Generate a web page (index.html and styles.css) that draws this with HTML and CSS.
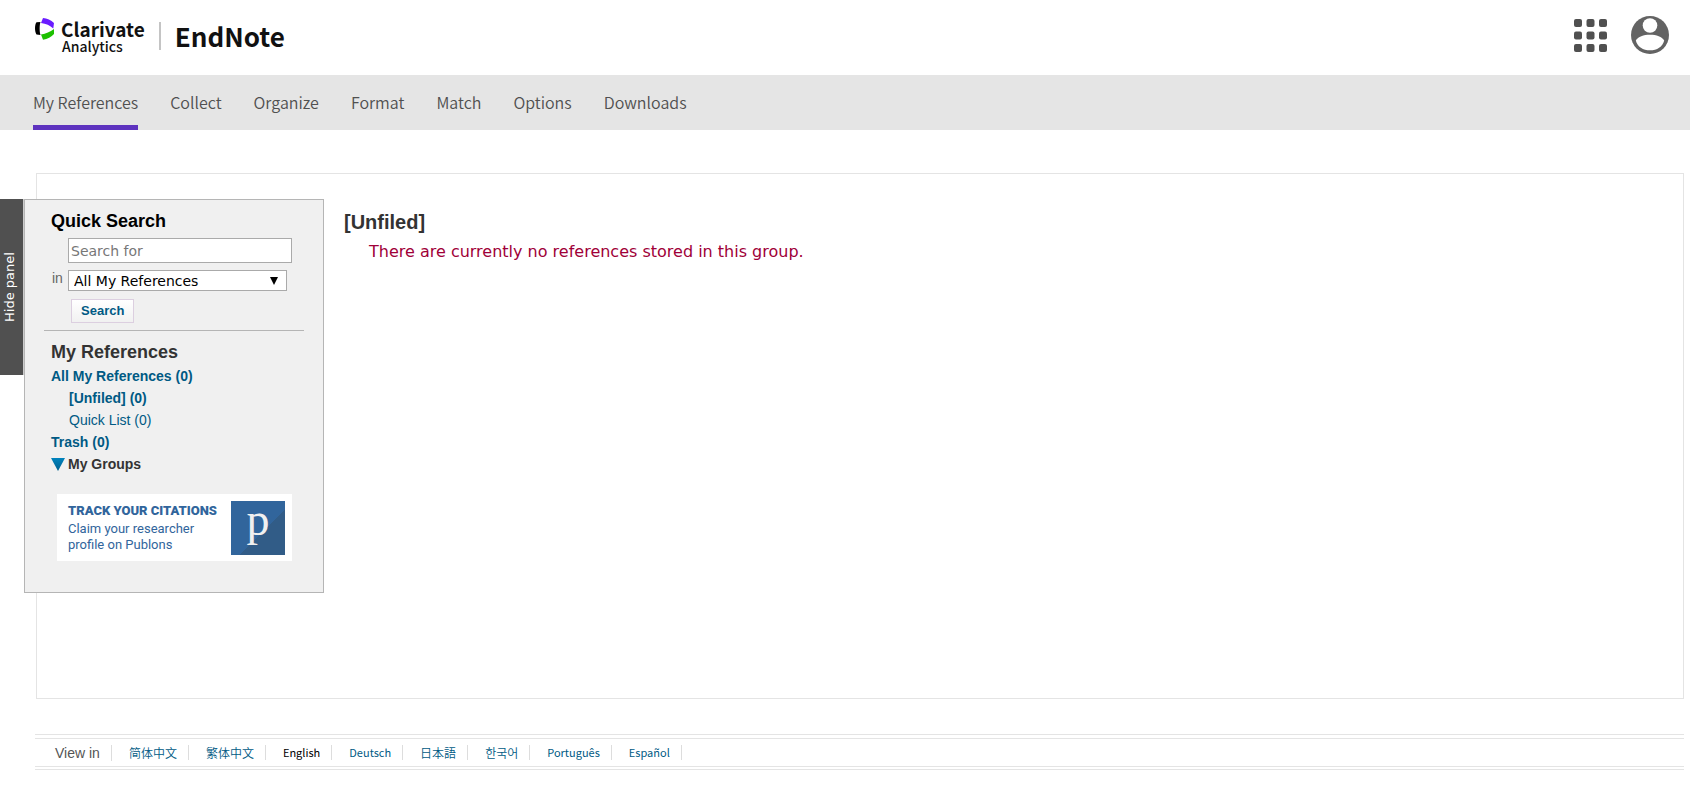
FILE: index.html
```html
<!DOCTYPE html>
<html lang="en">
<head>
<meta charset="utf-8">
<title>EndNote</title>
<link rel="stylesheet" href="styles.css">
</head>
<body>
<header class="header">
  <div class="brand">
    <div class="clarivate">
      <svg class="clarivate-mark" width="20" height="22" viewBox="0 0 20 22" aria-hidden="true">
        <path d="M6.500 4C5.400 7 5.400 13.500 6.500 17L2.500 16.500C.5 14 .5 6.500 2.500 4.300z" fill="#000"/>
        <path d="M9 0C13 .5 17 2 20 5L19.300 10.500C16 7.500 12 5.500 7 5z" fill="#6a1cff"/>
        <path d="M20 11v5c-2.600 3-6.500 5.200-11 5.700L7 16.500c5-.700 9-2.500 13-5.500z" fill="#1dc000"/>
      </svg>
      <div class="clarivate-name"><span class="clarivate-top">Clarivate</span><span class="clarivate-sub">Analytics</span></div>
    </div>
    <span class="brand-rule"></span>
    <span class="product">EndNote</span>
  </div>
  <div class="tools">
    <button class="icon-button" type="button" aria-label="Products">
      <svg width="34" height="34" viewBox="0 0 34 34" fill="#505050">
        <rect x="0" y="0" width="8" height="8" rx="2"/><rect x="12.500" y="0" width="8" height="8" rx="2"/><rect x="25" y="0" width="8" height="8" rx="2"/>
        <rect x="0" y="12.500" width="8" height="8" rx="2"/><rect x="12.500" y="12.500" width="8" height="8" rx="2"/><rect x="25" y="12.500" width="8" height="8" rx="2"/>
        <rect x="0" y="25" width="8" height="8" rx="2"/><rect x="12.500" y="25" width="8" height="8" rx="2"/><rect x="25" y="25" width="8" height="8" rx="2"/>
      </svg>
    </button>
    <button class="icon-button" type="button" aria-label="Account">
      <svg width="38" height="38" viewBox="0 0 38 38">
        <circle cx="19" cy="19" r="19" fill="#636363"/>
        <circle cx="19" cy="9.500" r="7.300" fill="#fff"/>
        <path d="M4.800 24.500C7 20.800 12.500 18.800 19 18.800s12 2 14.200 5.700C31.500 31 26 34.300 19 34.300S6.500 31 4.800 24.500z" fill="#fff"/>
      </svg>
    </button>
  </div>
</header>
<nav class="nav">
  <a class="nav-item nav-item-active" href="#">My References</a>
  <a class="nav-item" href="#">Collect</a>
  <a class="nav-item" href="#">Organize</a>
  <a class="nav-item" href="#">Format</a>
  <a class="nav-item" href="#">Match</a>
  <a class="nav-item" href="#">Options</a>
  <a class="nav-item" href="#">Downloads</a>
</nav>
<main class="frame">
  <div class="side">
    <button class="hide-panel" type="button">Hide panel</button>
    <aside class="panel">
      <form class="search">
        <h2 class="panel-title search-title">Quick Search</h2>
        <input class="search-text" type="text" placeholder="Search for" aria-label="Search for">
        <div class="scope">
          <label class="scope-label" for="scope">in</label>
          <div class="select-box">
            <select class="scope-select" id="scope"><option>All My References</option></select>
            <svg class="select-arrow" width="8" height="8" viewBox="0 0 8 8" aria-hidden="true"><path d="M0 0h8L4 8z" fill="#000"/></svg>
          </div>
        </div>
        <button class="search-button" type="button">Search</button>
      </form>
      <section class="groups">
        <h2 class="panel-title">My References</h2>
        <ul class="group-list">
          <li><a class="group" href="#">All My References (0)</a></li>
          <li class="nested"><a class="group" href="#">[Unfiled] (0)</a></li>
          <li class="nested"><a class="group group-plain" href="#">Quick List (0)</a></li>
          <li><a class="group" href="#">Trash (0)</a></li>
          <li class="my-groups">
            <svg width="14" height="13" viewBox="0 0 14 13" aria-hidden="true"><defs><linearGradient id="arrow" x2="0" y2="1"><stop stop-color="#0083bd"/><stop offset="1" stop-color="#00608f"/></linearGradient></defs><path d="M0 0h14L7 13z" fill="url(#arrow)"/></svg>
            <span>My Groups</span>
          </li>
        </ul>
      </section>
      <a class="banner" href="#">
        <span class="banner-text"><strong class="banner-title">TRACK YOUR CITATIONS</strong><span>Claim your researcher</span><span>profile on Publons</span></span>
        <span class="publons">p</span>
      </a>
    </aside>
  </div>
  <section class="content">
    <h1 class="content-title">[Unfiled]</h1>
    <p class="message">There are currently no references stored in this group.</p>
  </section>
</main>
<footer class="footer">
  <div class="languages">
    <span class="view-in">View in</span>
    <a class="language cjk" href="#" lang="zh-Hans">简体中文</a>
    <a class="language cjk" href="#" lang="zh-Hant">繁体中文</a>
    <a class="language current" href="#">English</a>
    <a class="language" href="#" lang="de">Deutsch</a>
    <a class="language cjk" href="#" lang="ja">日本語</a>
    <a class="language cjk" href="#" lang="ko">한국어</a>
    <a class="language" href="#" lang="pt">Português</a>
    <a class="language" href="#" lang="es">Español</a>
  </div>
</footer>
</body>
</html>
```

FILE: styles.css
```css
* { box-sizing: border-box; }
body { margin: 0; background: #fff; color: #333; font-family: "Liberation Sans", Arial, sans-serif; font-size: 14px; }
h1, h2, p, ul { margin: 0; padding: 0; }
ul { list-style: none; }
a { text-decoration: none; }
button { border: 0; padding: 0; background: none; cursor: pointer; }
svg { display: block; flex: none; }

.header { height: 75px; display: flex; justify-content: space-between; padding: 16px 21px 0 34px; }
.brand { display: flex; align-items: flex-start; color: #111; font-family: "Noto Sans CJK SC", "Noto Sans", sans-serif; }
.clarivate { display: flex; gap: 7px; padding-top: 2px; }
.clarivate-name { display: flex; flex-direction: column; }
.clarivate-top { font-size: 19px; font-weight: 700; line-height: 22px; }
.clarivate-sub { font-size: 14px; font-weight: 500; line-height: 12px; padding-left: 1px; }
.brand-rule { width: 2px; height: 28px; background: #c4c4c4; margin: 6px 14px 0; }
.product { font-size: 26px; font-weight: 700; line-height: 40px; }
.tools { display: flex; gap: 23px; align-items: flex-start; }
.tools .icon-button:first-child { padding-top: 3px; }

.nav { display: flex; gap: 32px; padding: 0 33px; background: #e5e5e5; }
.nav-item { height: 55px; border-bottom: 5px solid transparent; color: #505050; font: 350 16px/55px "Noto Sans CJK SC", "Noto Sans", sans-serif; }
.nav-item-active { border-color: #5e33bf; }

.frame { display: flex; align-items: flex-start; gap: 20px; margin: 43px 6px 0 36px; padding: 25px 0 105px; border: 1px solid #e4e4e4; }
.side { display: flex; align-items: flex-start; flex: none; margin-left: -37px; }
.hide-panel { width: 24px; height: 176px; padding-left: 4px; background: #505050; color: #fff; font: 13px/20px "DejaVu Sans", Verdana, sans-serif; writing-mode: vertical-rl; transform: rotate(180deg); border-left: 1px solid #ccc; }
.panel { width: 300px; padding: 10px 18px 31px; background: #f0f0f0; border: 1px solid #b5b5b5; }
.panel-title { font-size: 18px; line-height: 22px; }
.search { padding: 0 0 7px 7px; border-bottom: 1px solid #b5b5b5; margin: 0 1px 0 1px; }
.search-title { color: #000; }
.search-text { display: block; width: 224px; height: 25px; margin: 6px 0 7px 17px; padding: 0 2px; border: 1px solid #aaa; background: #fff; font: 14px "DejaVu Sans", Verdana, sans-serif; }
.search-text::placeholder { color: #777; opacity: 1; }
.scope { display: flex; }
.scope-label { width: 17px; padding-left: 1px; color: #666; line-height: 16px; }
.select-box { position: relative; width: 219px; }
.scope-select { display: block; width: 100%; height: 21px; padding: 0 5px; appearance: none; border: 1px solid #aaa; border-radius: 0; background: #fff; color: #000; font: 14px "DejaVu Sans", Verdana, sans-serif; }
.select-arrow { position: absolute; right: 9px; top: 7px; pointer-events: none; }
.search-button { display: block; height: 24px; margin: 8px 0 0 20px; padding: 0 9px 2px; border: 1px solid #dccfe0; background: linear-gradient(#fff, #f1f1f1); color: #005a84; font: bold 13px "Liberation Sans", Arial, sans-serif; }
.groups { padding: 10px 0 0 8px; }
.group-list { line-height: 22px; padding-top: 2px; }
.group { color: #005a84; font-weight: 700; }
.group-plain { font-weight: 400; }
.nested { padding-left: 18px; }
.my-groups { display: flex; align-items: center; gap: 3px; font-weight: 700; }
.banner { display: flex; justify-content: space-between; margin: 19px 13px 0 14px; padding: 7px 7px 6px 11px; background: #fff; color: #31659c; font: 13px/16px Roboto, sans-serif; }
.banner-text { display: flex; flex-direction: column; padding-top: 2px; }
.banner-title { font-size: 13px; font-weight: 900; padding-bottom: 2px; }
.publons { width: 54px; height: 54px; background: linear-gradient(135deg, #31659c 58%, #315c87 58%); color: #f0f0f0; text-align: center; font: 46px/38px "Liberation Serif", serif; }

.content { padding-top: 11px; }
.content-title { font-size: 20px; line-height: 24px; }
.message { padding: 6px 0 0 25px; color: #a00038; font: 16px/24px "DejaVu Sans", Verdana, sans-serif; }

.footer { margin: 35px 6px 26px 35px; border: solid #e4e4e4; border-width: 1px 0; padding: 3px 0 2px; }
.languages { display: flex; align-items: center; height: 29px; padding-left: 20px; border: solid #e4e4e4; border-width: 1px 0; }
.view-in { padding-right: 11px; border-right: 1px solid #ddd; color: #555; line-height: 16px; }
.language { padding: 0 11px 0 17px; border-right: 1px solid #ddd; color: #005a84; font: 11px/15px "Noto Sans CJK SC", "Noto Sans CJK KR", sans-serif; }
.language.cjk { font-size: 12px; font-weight: 350; }
.language.current { color: #000; }
```
